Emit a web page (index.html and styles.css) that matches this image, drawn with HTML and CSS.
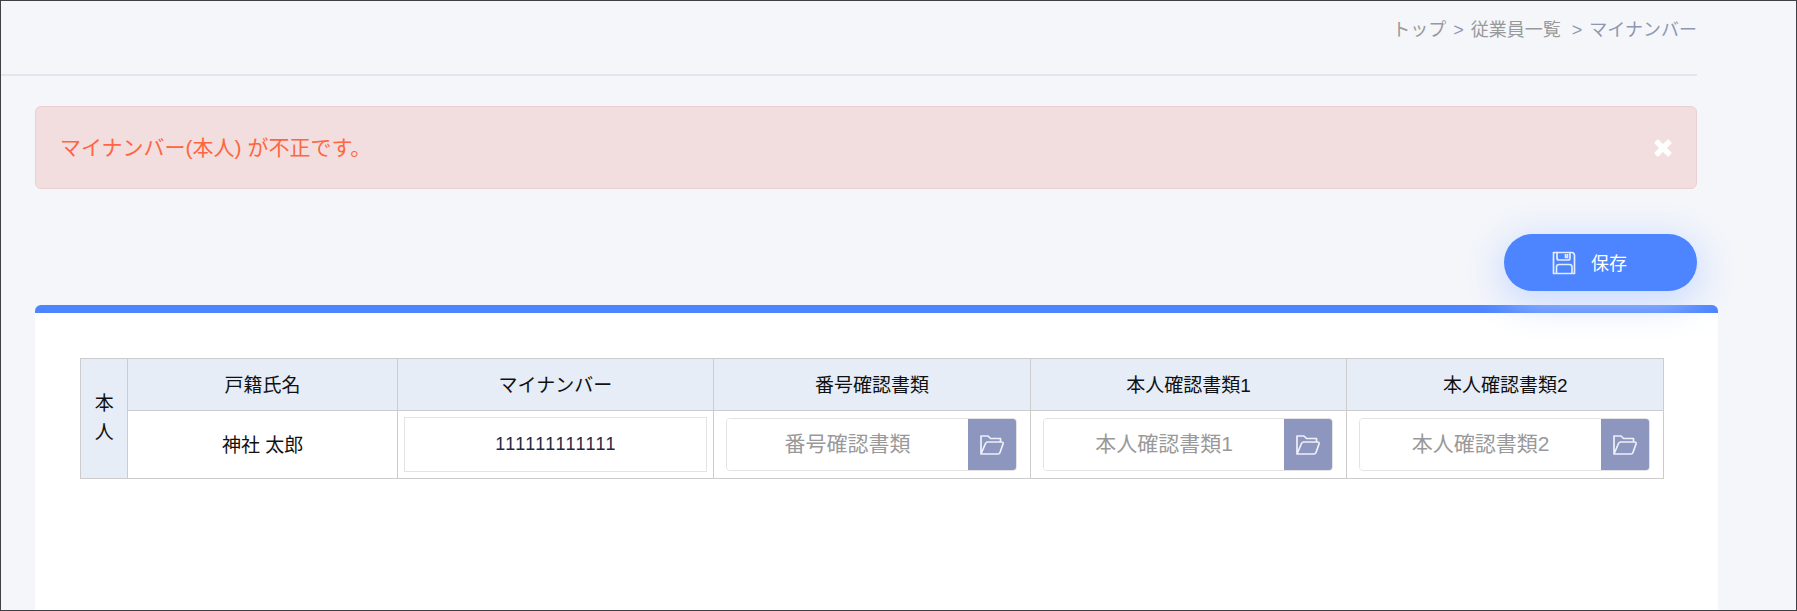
FILE: index.html
```html
<!DOCTYPE html>
<html lang="ja">
<head>
<meta charset="utf-8">
<meta name="viewport" content="width=device-width, initial-scale=1">
<title>マイナンバー</title>
<link rel="stylesheet" href="styles.css">
</head>
<body class="page">
<svg class="sprite" aria-hidden="true">
  <symbol id="icon-folder" viewBox="0 0 24 20">
    <path d="M1 19V1h7l2.500 2.500H20.500V6.500M1 19L5.500 8.500Q6 7.300 7.500 7H21Q23.500 6.800 23 9L20 17.500Q19.500 19 18 19Z" fill="none" stroke="currentColor" stroke-width="1.700" stroke-linejoin="round"/>
  </symbol>
</svg>

<header class="page-header">
  <nav class="breadcrumb" aria-label="パンくず">
    <a class="crumb" href="#">トップ</a>
    <span class="crumb-sep">&gt;</span>
    <a class="crumb" href="#">従業員一覧</a>
    <span class="crumb-sep crumb-sep-wide">&gt;</span>
    <span class="crumb-current">マイナンバー</span>
  </nav>
</header>

<main class="content">
  <div class="alert" role="alert">
    <p class="alert-text">マイナンバー(本人) が不正です。</p>
    <button class="alert-close" type="button" aria-label="閉じる">
      <svg class="close-icon" viewBox="0 0 18 18" aria-hidden="true"><path d="M2 2L16 16M16 2L2 16" stroke="currentColor" stroke-width="5.400" fill="none"/></svg>
    </button>
  </div>

  <div class="actions">
    <button class="save-button" type="submit" form="number-form">
      <svg class="save-icon" viewBox="0 0 24 24" aria-hidden="true">
        <g fill="none" stroke="currentColor" stroke-width="1.700" stroke-linejoin="round">
          <path d="M1.500 1.500H19.500Q22.500 1.500 22.500 4.500V22.500H1.500Z"/>
          <path d="M5 1.500V7Q5 9 7 9H16Q18 9 18 7V1.500"/>
          <path d="M4.500 22.500V16Q4.500 13.500 7 13.500H17.500Q20 13.500 20 16V22.500"/>
          <path d="M13.500 3V6.500H15.500V3"/>
        </g>
      </svg>
      <span class="save-label">保存</span>
    </button>
  </div>

  <form class="card" id="number-form">
    <table class="number-table">
      <colgroup>
        <col class="col-owner"><col class="col-name"><col class="col-field"><col class="col-field"><col class="col-field"><col class="col-field">
      </colgroup>
      <tr class="head-row">
        <th class="owner" rowspan="2" scope="rowgroup">本<br>人</th>
        <th scope="col">戸籍氏名</th>
        <th scope="col"><label for="my-number">マイナンバー</label></th>
        <th scope="col"><label for="doc-number">番号確認書類</label></th>
        <th scope="col"><label for="doc-id1">本人確認書類1</label></th>
        <th scope="col"><label for="doc-id2">本人確認書類2</label></th>
      </tr>
      <tr class="body-row">
        <td class="name-cell">神社 太郎</td>
        <td class="number-cell"><input class="number-input" id="my-number" type="text" inputmode="numeric" value="111111111111"></td>
        <td class="file-cell">
          <div class="file-field">
            <input class="file-name" id="doc-number" type="text" placeholder="番号確認書類" readonly>
            <button class="file-button" type="button" aria-label="番号確認書類を選択"><svg class="folder-icon" aria-hidden="true"><use href="#icon-folder"/></svg></button>
          </div>
        </td>
        <td class="file-cell">
          <div class="file-field">
            <input class="file-name" id="doc-id1" type="text" placeholder="本人確認書類1" readonly>
            <button class="file-button" type="button" aria-label="本人確認書類1を選択"><svg class="folder-icon" aria-hidden="true"><use href="#icon-folder"/></svg></button>
          </div>
        </td>
        <td class="file-cell">
          <div class="file-field">
            <input class="file-name" id="doc-id2" type="text" placeholder="本人確認書類2" readonly>
            <button class="file-button" type="button" aria-label="本人確認書類2を選択"><svg class="folder-icon" aria-hidden="true"><use href="#icon-folder"/></svg></button>
          </div>
        </td>
      </tr>
    </table>
  </form>
</main>
</body>
</html>
```

FILE: styles.css
```css
* {
  box-sizing: border-box;
}

.page {
  display: flex;
  flex-direction: column;
  min-height: 100vh;
  margin: 0;
  border: 1px solid #3f4045;
  background: #f4f6fa;
  color: #111;
  font-family: "Liberation Sans", "Noto Sans CJK JP", sans-serif;
  font-size: 19px;
}

.page button,
.page input {
  font-family: inherit;
}

.sprite {
  display: none;
}

/* Header */
.page-header {
  margin-right: 99px;
  padding: 16px 0 31px;
  border-bottom: 2px solid #e3e5f0;
}

.breadcrumb {
  display: flex;
  justify-content: flex-end;
  gap: 7px;
  color: #8d96b2;
  font-size: 18px;
  line-height: 26px;
}

.crumb {
  color: #999;
  text-decoration: none;
}

.crumb-sep-wide {
  margin-left: 4px;
}

/* Content */
.content {
  display: flex;
  flex: 1;
  flex-direction: column;
  padding: 30px 99px 0 34px;
}

.alert {
  display: flex;
  align-items: center;
  justify-content: space-between;
  padding: 24px;
  border: 1px solid #eccfd3;
  border-radius: 6px;
  background: #f2dede;
}

.alert-text {
  margin: 0;
  color: #ff6540;
  font-size: 21px;
  line-height: 33px;
}

.alert-close {
  display: flex;
  padding: 0;
  border: 0;
  background: none;
  color: #fff;
}

.close-icon {
  width: 18px;
  height: 18px;
}

.actions {
  display: flex;
  justify-content: flex-end;
  margin: 45px 0 14px;
}

.save-button {
  position: relative;
  z-index: 1;
  display: flex;
  align-items: center;
  gap: 15px;
  width: 193px;
  height: 57px;
  padding: 0 48px;
  border: 0;
  border-radius: 29px;
  background: #4d84ff;
  box-shadow: 0 8px 36px 4px rgba(196, 215, 255, 0.9);
  color: #fff;
  font-size: 18px;
}

.save-icon {
  width: 24px;
  height: 24px;
  opacity: 0.85;
}

.save-label {
  padding-bottom: 2px;
}

.card {
  flex: 1;
  margin-right: -21px;
  padding: 45px 54px 45px 45px;
  border-top: 8px solid #4d84ff;
  border-radius: 6px 6px 0 0;
  background: #fff;
}

/* Table */
.number-table {
  width: 100%;
  border-collapse: collapse;
  table-layout: fixed;
  text-align: center;
}

.col-owner {
  width: 3%;
}

.col-name {
  width: 17%;
}

.col-field {
  width: 20%;
}

.number-table th,
.number-table td {
  padding: 0;
  border: 1px solid #ccc;
  font-weight: 400;
}

.number-table th {
  padding-bottom: 2px;
  background: #e6edf7;
}

.head-row {
  height: 52px;
}

.body-row {
  height: 68px;
}

.owner {
  line-height: 29px;
}

.number-table .name-cell {
  padding-bottom: 3px;
}

.number-table .number-cell {
  padding: 0 6px;
}

.number-input {
  display: block;
  width: 100%;
  height: 55px;
  border: 1px solid #e3e3e3;
  color: #1e2a45;
  font-size: 18px;
  font-kerning: none;
  text-align: center;
}

.number-table .file-cell {
  padding: 0 13px 0 12px;
}

.file-field {
  display: flex;
  height: 53px;
  overflow: hidden;
  border: 1px solid #e3e3e3;
  border-radius: 4px;
}

.file-name {
  flex: 1;
  min-width: 0;
  padding: 0 0 2px;
  border: 0;
  font-size: 21px;
  text-align: center;
}

.file-name::placeholder {
  color: #999;
}

.file-button {
  display: flex;
  align-items: center;
  justify-content: center;
  width: 48px;
  padding: 0;
  border: 0;
  background: #8d96be;
  color: #eef0fa;
}

.folder-icon {
  width: 24px;
  height: 20px;
}
```
